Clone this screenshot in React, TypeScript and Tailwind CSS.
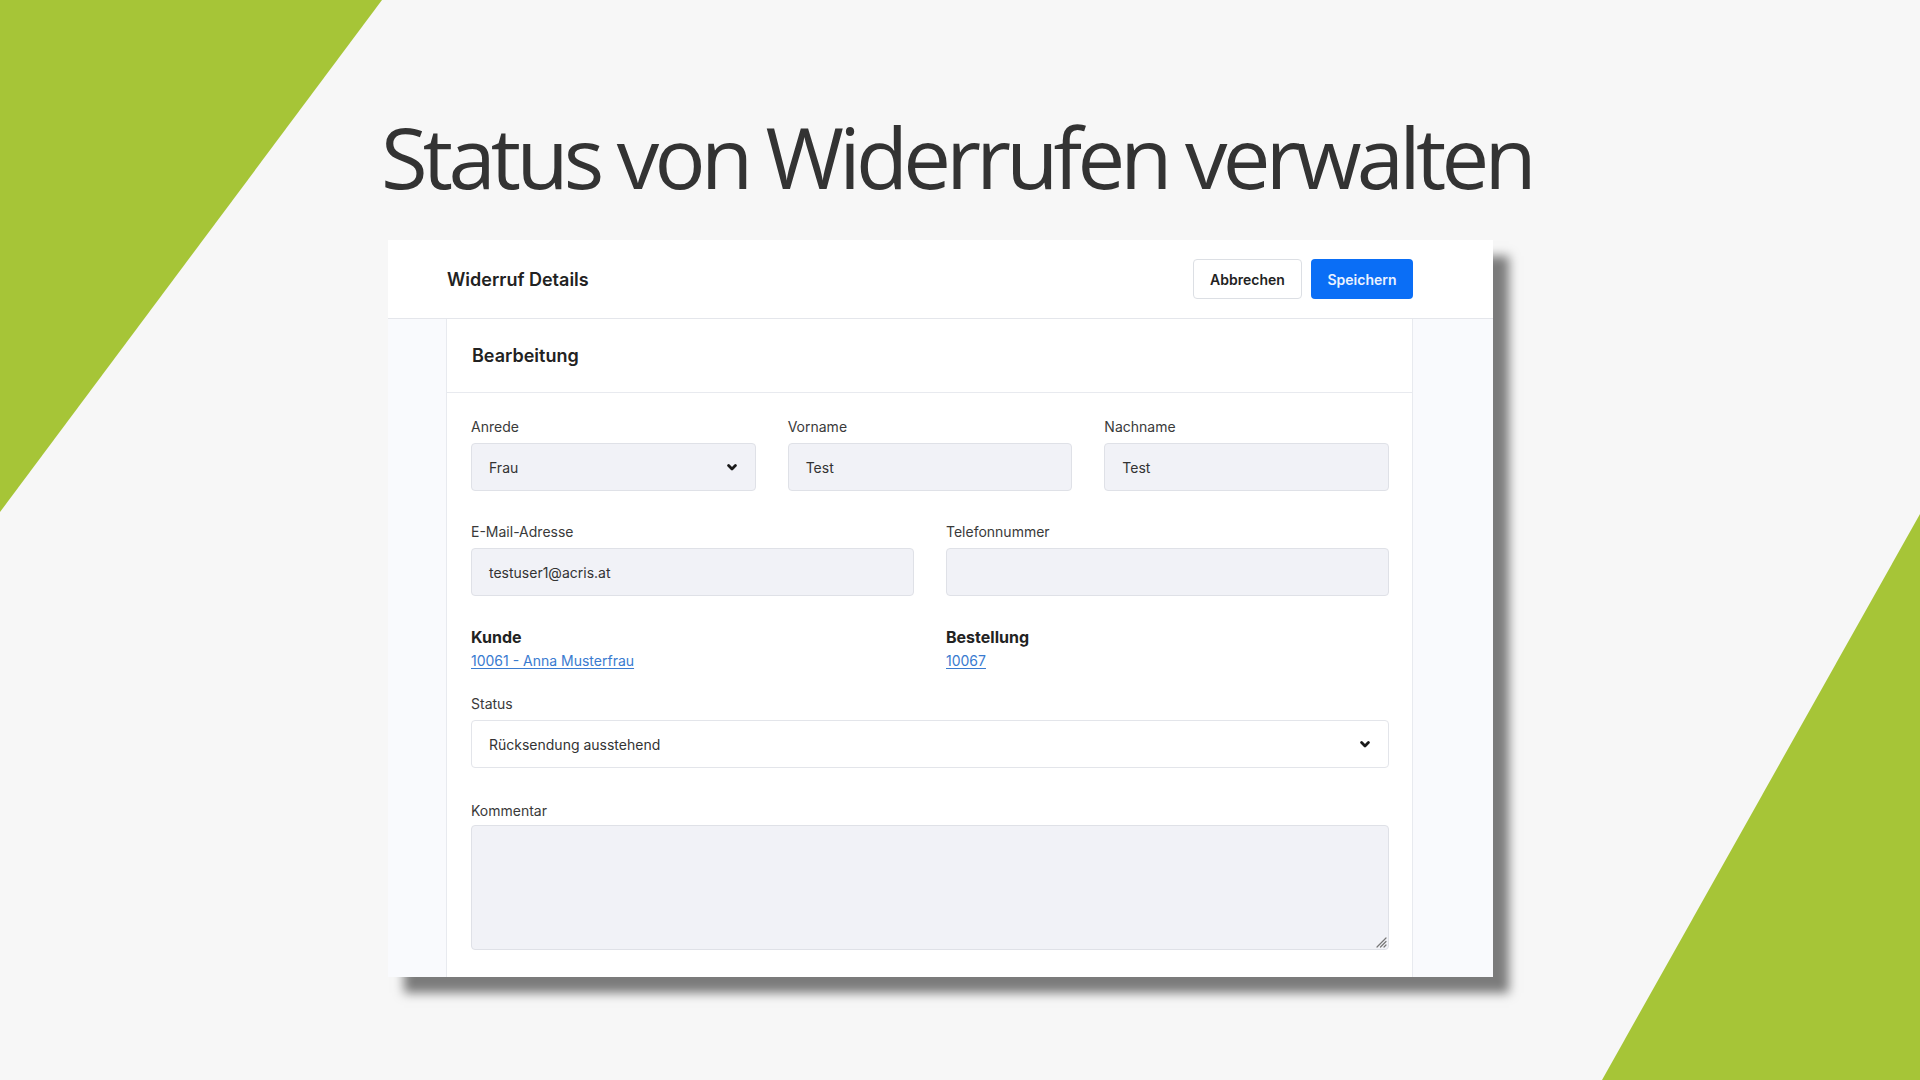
import React from "react";

const Chevron = () => (
    <svg width="10" height="7" viewBox="0 0 10 7" className="text-[#1a1a1a]">
        <path d="M1.6 1.6 L5 5 L8.4 1.6" fill="none" stroke="currentColor" strokeWidth="2.8" strokeLinecap="round" strokeLinejoin="round" />
    </svg>
);

const Label = ({ children, tight }: { children: React.ReactNode; tight?: boolean }) => (
    <div className={`text-[14px] leading-[20px] text-[#3a3a3a] ${tight ? "mb-[4px]" : "mb-[6px]"}`}>{children}</div>
);

const Field = ({
    label,
    value,
    select,
    white,
}: {
    label: string;
    value?: string;
    select?: boolean;
    white?: boolean;
}) => (
    <div className="flex flex-col">
        <Label>{label}</Label>
        <div
            className={`h-[48px] rounded-[4px] border flex items-center justify-between pl-[17px] pr-[18px] text-[14px] text-[#333] ${
                white ? "bg-white border-[#e3e5ea]" : "bg-[#f1f2f7] border-[#dfe1e7]"
            }`}
        >
            <span>{value}</span>
            {select && <Chevron />}
        </div>
    </div>
);

export default function App() {
    return (
        <div
            className="relative w-[1920px] h-[1080px] bg-[#f7f7f7] overflow-hidden"
            style={{ fontFamily: "Inter, 'Noto Sans', sans-serif" }}
        >
            <svg className="absolute inset-0" width="1920" height="1080">
                <polygon points="0,0 382,0 0,512" fill="#a6c537" />
                <polygon points="1602,1080 1920,1080 1920,514" fill="#a6c537" />
            </svg>

            <div className="relative flex flex-col">
                <h1
                    className="pl-[381px] mt-[114px] text-[85px] leading-[85px] text-[#333] tracking-[-0.056em]"
                    style={{ fontFamily: "'Open Sans', sans-serif" }}
                >
                    Status von Widerrufen verwalten
                </h1>

                <div className="ml-[388px] mt-[41px] w-[1105px] h-[737px] bg-white flex flex-col overflow-hidden shadow-[16px_16px_10px_rgba(0,0,0,0.5)]">
                    <div className="h-[79px] shrink-0 flex items-center justify-between pl-[59px] pr-[80px] border-b border-[#e4e6eb]">
                        <div className="text-[18px] font-semibold text-[#222]">Widerruf Details</div>
                        <div className="flex gap-[9px]">
                            <button className="w-[109px] h-[40px] rounded-[4px] border border-[#dcdfe4] bg-white text-[14px] font-semibold text-[#222]">
                                Abbrechen
                            </button>
                            <button className="w-[102px] h-[40px] rounded-[4px] bg-[#0a6ef6] text-[14px] font-semibold text-[#eaf2ff]">
                                Speichern
                            </button>
                        </div>
                    </div>

                    <div className="flex-1 flex bg-[#f9fafd] pl-[58px] pr-[80px]">
                        <div className="flex-1 bg-white border-x border-[#e8eaef] flex flex-col">
                            <div className="h-[74px] shrink-0 flex items-center pl-[25px] border-b border-[#e8eaef] text-[18px] font-semibold text-[#222]">
                                Bearbeitung
                            </div>
                            <div className="flex flex-col pl-[24px] pr-[23px] pt-[24px]">
                                <div className="grid grid-cols-3 gap-x-[32px]">
                                    <Field label="Anrede" value="Frau" select />
                                    <Field label="Vorname" value="Test" />
                                    <Field label="Nachname" value="Test" />
                                </div>
                                <div className="grid grid-cols-2 gap-x-[32px] mt-[31px]">
                                    <Field label="E-Mail-Adresse" value="testuser1@acris.at" />
                                    <Field label="Telefonnummer" value="" />
                                </div>
                                <div className="grid grid-cols-2 gap-x-[32px] mt-[31px]">
                                    <div className="flex flex-col">
                                        <div className="text-[16px] leading-[20px] font-bold text-[#222]">Kunde</div>
                                        <a className="text-[14px] leading-[20px] mt-[4px] text-[#3a7bd0] underline underline-offset-2">
                                            10061 - Anna Musterfrau
                                        </a>
                                    </div>
                                    <div className="flex flex-col">
                                        <div className="text-[16px] leading-[20px] font-bold text-[#222]">Bestellung</div>
                                        <a className="text-[14px] leading-[20px] mt-[4px] text-[#3a7bd0] underline underline-offset-2">
                                            10067
                                        </a>
                                    </div>
                                </div>
                                <div className="mt-[23px]">
                                    <Field label="Status" value="Rücksendung ausstehend" select white />
                                </div>
                                <div className="mt-[33px] flex flex-col">
                                    <Label tight>Kommentar</Label>
                                    <div className="relative">
                                        <textarea className="block w-full h-[125px] resize-none rounded-[4px] border border-[#dfe1e7] bg-[#f1f2f7] outline-none" />
                                        <svg width="12" height="12" viewBox="0 0 12 12" className="absolute right-[2px] bottom-[2px] text-[#777]">
                                            <path d="M11 2 L2 11 M11 5.5 L5.5 11 M11 9 L9 11" stroke="currentColor" strokeWidth="1.2" strokeLinecap="round" />
                                        </svg>
                                    </div>
                                </div>
                            </div>
                        </div>
                    </div>
                </div>
            </div>
        </div>
    );
}
